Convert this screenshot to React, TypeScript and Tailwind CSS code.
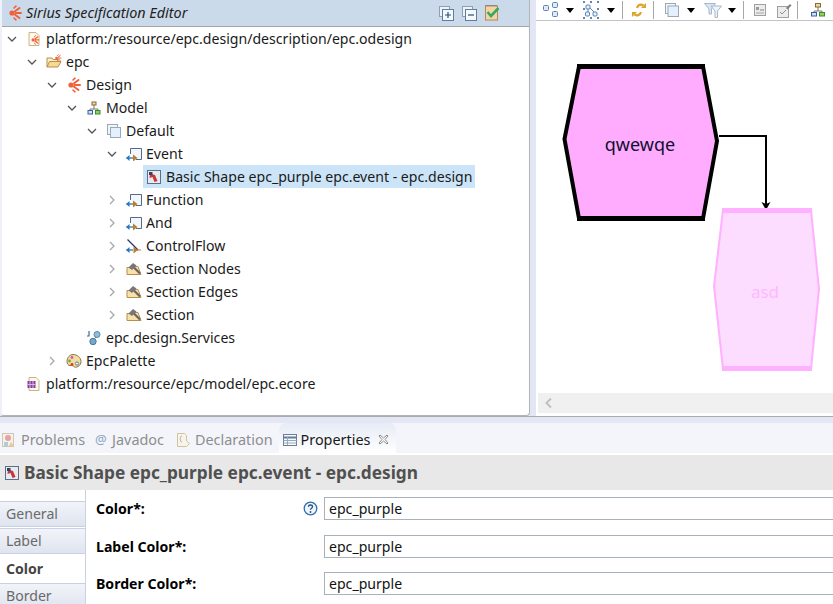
import type { ReactNode } from "react";

const SANS = "font-['Noto_Sans','Open_Sans',sans-serif]";

function Sirius({ x = 0, y = 0, s = 1 }: { x?: number; y?: number; s?: number }) {
  return (
    <g transform={`translate(${x} ${y}) scale(${s})`} stroke="#f0603a" strokeLinecap="round">
      <circle cx="5" cy="8" r="2.6" fill="#f0603a" stroke="none" />
      <path d="M8 6.3 L12.5 3 M8.7 8 L14 8 M8 9.7 L12.5 13" strokeWidth="2" />
      <path d="M7 3 L9 1.2 M7 13 L9 14.8" strokeWidth="1.6" />
    </g>
  );
}

function Icon({ children }: { children: ReactNode }) {
  return (
    <svg width="16" height="16" viewBox="0 0 16 16" className="shrink-0">
      {children}
    </svg>
  );
}

const icons: Record<string, ReactNode> = {
  sirius: <Sirius />,
  doc: (
    <>
      <path d="M3 1.5h7l3 3v10H3z" fill="#fdf8ec" stroke="#c9b48a" />
      <Sirius x={4} y={4} s={0.62} />
    </>
  ),
  folder: (
    <>
      <path d="M1 13V4h5l1 1.5h5V8" fill="#fbeec8" stroke="#b78f4a" />
      <path d="M1 13l2.5-5.5H15L12 13z" fill="#f8d98f" stroke="#b78f4a" />
      <Sirius x={8} y={0} s={0.5} />
    </>
  ),
  model: (
    <>
      <path d="M8 5v4M4 11V9h8v2" fill="none" stroke="#777" />
      <rect x="6" y="2" width="4" height="3" fill="#e8d8a8" stroke="#8a6a2a" />
      <rect x="2" y="10.5" width="4.5" height="3.5" fill="#cfe0f5" stroke="#35609c" />
      <rect x="9.5" y="10.5" width="4.5" height="3.5" fill="#8fd05f" stroke="#3a8a30" />
    </>
  ),
  layer: (
    <>
      <rect x="1.5" y="1.5" width="10" height="10" fill="#f2f6fb" stroke="#9aa8b8" />
      <rect x="4.5" y="4.5" width="10" height="10" fill="#e4f0fb" stroke="#9aa8b8" />
    </>
  ),
  mapping: (
    <>
      <path d="M4.5 8V2.5h11v11H10" fill="#f2f7fd" stroke="#566b8a" />
      <path d="M0.5 12H7" stroke="#2878c0" strokeWidth="1.3" />
      <path d="M3.5 9l-3.5 3 3.5 3z" fill="#2878c0" />
      <path d="M7 8.5l4.5 3.5L7 15.5z" fill="#c07c28" />
    </>
  ),
  shape: (
    <>
      <rect x="1.5" y="1.5" width="13" height="13" fill="#e6ebf2" stroke="#5d6f85" />
      <path d="M4 4.5l5 1.5 2.5 6-3 1-2-5-3 1z" fill="#c8353a" />
      <rect x="3" y="3" width="3.5" height="3" fill="#33445c" />
    </>
  ),
  flow: (
    <>
      <path d="M1.5 1.5L12 12" stroke="#24386e" strokeWidth="1.3" />
      <path d="M0.5 12H7" stroke="#2878c0" strokeWidth="1.3" />
      <path d="M3.5 9l-3.5 3 3.5 3z" fill="#2878c0" />
      <path d="M7.5 8.5l4.5 3.5-4.5 3.5z" fill="#c07c28" />
      <path d="M11 12h4" stroke="#c07c28" />
    </>
  ),
  section: (
    <>
      <path d="M1 13.5V6.5h3l1-1h7l3 8z" fill="#f9dfa8" stroke="#b78f4a" />
      <path d="M2.5 6.5L7 2l3.5 2.5-4.5 4.5z" fill="#77777b" />
      <path d="M8 6.5l6 6" stroke="#66666a" strokeWidth="2.2" />
    </>
  ),
  services: (
    <>
      <path d="M3 1v5H1" fill="none" stroke="#3a6e9a" strokeWidth="1.2" />
      <circle cx="11" cy="4.5" r="3" fill="#8cc0de" stroke="#5a86a8" />
      <circle cx="7" cy="11.5" r="3.2" fill="#74a8cc" stroke="#4a7898" />
      <path d="M9 8l1-1" stroke="#5a86a8" />
    </>
  ),
  palette: (
    <>
      <path d="M7 1.5c4 0 8 3 8 7 0 2-1 4-3 5s-3 1-4 0-2-1-4-1-3-2-3-4c0-4 3-7 6-7z" fill="#f3dc9c" stroke="#8a7440" />
      <circle cx="6" cy="4.5" r="1.4" fill="#c45ac8" />
      <circle cx="3.5" cy="8" r="1.4" fill="#5ab84a" />
      <circle cx="6" cy="11.5" r="1.4" fill="#e03838" />
      <circle cx="11" cy="10.5" r="1.6" fill="#f6f6f6" stroke="#5a7ac0" />
    </>
  ),
  ecore: (
    <>
      <path d="M3 1.5h7l3 3v10H3z" fill="#fdf8ec" stroke="#c9b48a" />
      <rect x="1.5" y="5" width="8" height="7" fill="#8a3f9c" />
      <path d="M4 5v7M7 5v7M1.5 8.5h8" stroke="#d9b8e0" />
    </>
  ),
};

function Chevron({ open }: { open: boolean }) {
  return (
    <svg width="10" height="10" viewBox="0 0 10 10">
      {open ? (
        <path d="M1 3l4 4 4-4" fill="none" stroke="#555" strokeWidth="1.3" />
      ) : (
        <path d="M3 1l4 4-4 4" fill="none" stroke="#a8a8a8" strokeWidth="1.3" />
      )}
    </svg>
  );
}

type Node = { depth: number; icon: string; label: string; toggle?: "open" | "closed"; selected?: boolean };

const tree: Node[] = [
  { depth: 0, icon: "doc", label: "platform:/resource/epc.design/description/epc.odesign", toggle: "open" },
  { depth: 1, icon: "folder", label: "epc", toggle: "open" },
  { depth: 2, icon: "sirius", label: "Design", toggle: "open" },
  { depth: 3, icon: "model", label: "Model", toggle: "open" },
  { depth: 4, icon: "layer", label: "Default", toggle: "open" },
  { depth: 5, icon: "mapping", label: "Event", toggle: "open" },
  { depth: 6, icon: "shape", label: "Basic Shape epc_purple epc.event - epc.design", selected: true },
  { depth: 5, icon: "mapping", label: "Function", toggle: "closed" },
  { depth: 5, icon: "mapping", label: "And", toggle: "closed" },
  { depth: 5, icon: "flow", label: "ControlFlow", toggle: "closed" },
  { depth: 5, icon: "section", label: "Section Nodes", toggle: "closed" },
  { depth: 5, icon: "section", label: "Section Edges", toggle: "closed" },
  { depth: 5, icon: "section", label: "Section", toggle: "closed" },
  { depth: 3, icon: "services", label: "epc.design.Services" },
  { depth: 2, icon: "palette", label: "EpcPalette", toggle: "closed" },
  { depth: 0, icon: "ecore", label: "platform:/resource/epc/model/epc.ecore" },
];

function TreeRow({ node }: { node: Node }) {
  return (
    <div className="flex h-[23px] items-center" style={{ paddingLeft: 2 + node.depth * 20 }}>
      <div className="flex w-4 shrink-0 justify-center">
        {node.toggle && <Chevron open={node.toggle === "open"} />}
      </div>
      <div className={`ml-[3px] flex h-[23px] items-center pl-[3px] pr-[3px] ${node.selected ? "bg-[#cce4f7]" : ""}`}>
        <Icon>{icons[node.icon]}</Icon>
        <span className="ml-1 whitespace-nowrap text-[#1a1a1a]">{node.label}</span>
      </div>
    </div>
  );
}

function TreePanel() {
  return (
    <div className="flex w-[530px] shrink-0 flex-col rounded-bl-[4px] rounded-br-[4px] border-b border-l-2 border-r border-[#b4b4b4] border-l-[#eef1f8] bg-white">
      <div className="flex h-[27px] shrink-0 items-center border-b border-[#a5a5a5] bg-[#cbdaea] pl-[5px] pr-[29px]">
        <Icon>
          <Sirius />
        </Icon>
        <span className="ml-[3px] text-[14.4px] italic text-[#222]">Sirius Specification Editor</span>
        <div className="ml-auto flex items-center gap-[8px]">
          <svg width="15" height="15" viewBox="0 0 15 15">
            <rect x="0.5" y="0.5" width="10" height="10" fill="#eef3f8" stroke="#8da0b4" />
            <rect x="3.5" y="3.5" width="11" height="11" fill="#f6f9fc" stroke="#5f7d9c" />
            <path d="M6 9h6M9 6v6" stroke="#24527e" strokeWidth="1.2" />
          </svg>
          <svg width="15" height="15" viewBox="0 0 15 15">
            <rect x="0.5" y="0.5" width="10" height="10" fill="#eef3f8" stroke="#8da0b4" />
            <rect x="3.5" y="3.5" width="11" height="11" fill="#f6f9fc" stroke="#5f7d9c" />
            <path d="M6 9h6" stroke="#24527e" strokeWidth="1.2" />
          </svg>
          <svg width="15" height="18" viewBox="0 0 15 18">
            <rect x="0.5" y="2" width="12" height="14" fill="#f3d5a5" stroke="#b08a58" />
            <path d="M0.5 1.5h12" stroke="#5a5a6a" strokeDasharray="1 1" />
            <path d="M2.5 8l3.5 4L13.5 4" fill="none" stroke="#3aa860" strokeWidth="2.6" />
          </svg>
        </div>
      </div>
      <div className="flex-1">
        {tree.map((node) => (
          <TreeRow key={node.label + node.depth} node={node} />
        ))}
      </div>
    </div>
  );
}

function Caret() {
  return <span className="h-0 w-0 border-x-[4.5px] border-t-[5px] border-x-transparent border-t-black" />;
}

function Sep() {
  return <span className="block h-[18px] w-px bg-[#a8a8a8]" />;
}

function Toolbar() {
  return (
    <div className="flex h-[21px] shrink-0 items-center border-b border-[#c4c4c4] bg-white pl-[7px]">
      <svg width="16" height="16" viewBox="0 0 16 16" className="mr-[7px]">
        <rect x="0.5" y="3.5" width="5" height="5" rx="1" fill="#dfeafa" stroke="#5a82b4" />
        <rect x="9.5" y="0.5" width="5" height="5" rx="1" fill="#dfeafa" stroke="#5a82b4" />
        <rect x="9.5" y="9.5" width="5" height="5" rx="1" fill="#dfeafa" stroke="#5a82b4" />
      </svg>
      <Caret />
      <svg width="18" height="18" viewBox="0 0 18 18" className="ml-[8px] mr-[7px]">
        <rect x="4" y="4" width="4" height="4" rx="1" fill="#eaf1fb" stroke="#5a82b4" />
        <rect x="3.5" y="11" width="4" height="4" rx="1" fill="#eaf1fb" stroke="#5a82b4" />
        <rect x="11" y="11" width="4" height="4" rx="1" fill="#eaf1fb" stroke="#5a82b4" />
        <path d="M6 8v3M8 7l4 4" stroke="#5a82b4" />
        <path d="M1 1h2M8 1h2M15 1h2M1 8h2M15 8h2M1 17h2M8 17h2M15 17h2" stroke="#2f5c94" strokeWidth="1.6" />
      </svg>
      <Caret />
      <span className="ml-[7px]"><Sep /></span>
      <svg width="16" height="16" viewBox="0 0 16 16" className="ml-[8px] mr-[6px]">
        <path d="M6 6c1-3.5 4-4 6.5-2.5" fill="none" stroke="#dca428" strokeWidth="2.2" />
        <path d="M15 1v5h-5z" fill="#dca428" />
        <path d="M10 10c-1 3.5-4 4-6.5 2.5" fill="none" stroke="#dca428" strokeWidth="2.2" />
        <path d="M1 15v-5h5z" fill="#dca428" />
      </svg>
      <Sep />
      <svg width="14" height="14" viewBox="0 0 14 14" className="ml-[11px] mr-[8px]">
        <rect x="0.5" y="0.5" width="10" height="10" fill="#f3f6fa" stroke="#9aa8b8" />
        <rect x="3" y="3" width="10.5" height="10.5" fill="#e4f0fb" stroke="#9aa8b8" />
      </svg>
      <Caret />
      <svg width="18" height="16" viewBox="0 0 18 16" className="ml-[9px] mr-[6px]">
        <path d="M0.5 1.5h11L7.5 7v5H5V7z" fill="#d6e6f4" stroke="#a8b8c8" />
        <path d="M7 4h10.5l-4 5v6.5h-2.5V9z" fill="#eaf4fb" stroke="#a8b8c8" />
      </svg>
      <Caret />
      <span className="ml-[7px]"><Sep /></span>
      <svg width="12" height="12" viewBox="0 0 12 12" className="ml-[10px] mr-[11px]">
        <rect x="0.5" y="0.5" width="11" height="11" fill="#ececec" stroke="#a0a0a0" />
        <rect x="2" y="3" width="3" height="3" fill="#9a9a9a" />
        <rect x="6" y="5" width="4" height="2" fill="#b8b8b8" />
        <rect x="2" y="8" width="8" height="2" fill="#c8c8c8" />
      </svg>
      <svg width="15" height="15" viewBox="0 0 15 15" className="mr-[5px]">
        <rect x="0.5" y="3.5" width="11" height="11" fill="#ececec" stroke="#a0a0a0" />
        <path d="M9 5l4-4 1.5 1.5-4 4z" fill="#808080" />
        <path d="M3 9l2 2 4-4" fill="none" stroke="#909090" />
      </svg>
      <Sep />
      <svg width="16" height="16" viewBox="0 0 16 16" className="ml-[12px]">
        <path d="M8 5v4M4 11V9h8v2" fill="none" stroke="#777" />
        <rect x="5.5" y="1.5" width="5" height="3.5" fill="#e8d8a8" stroke="#8a6a2a" />
        <rect x="1.5" y="10.5" width="5" height="3.5" fill="#cfe0f5" stroke="#35609c" />
        <rect x="9.5" y="10.5" width="5" height="3.5" fill="#8fd05f" stroke="#3a8a30" />
      </svg>
    </div>
  );
}

function Diagram() {
  // viewBox keeps the screen coordinates of the picture
  return (
    <svg width="297" height="372" viewBox="536 21 297 372" className="block shrink-0">
      <polygon points="579,66.5 703,66.5 717,141 703,218.5 579,218.5 564.5,139" fill="#ffacff" stroke="#000" strokeWidth="4" strokeLinejoin="miter" />
      <rect x="577" y="64" width="128" height="5" fill="#000" />
      <rect x="577" y="216" width="128" height="5" fill="#000" />
      <text x="640" y="151" textAnchor="middle" fontFamily="'Noto Sans', sans-serif" fontSize="18" fill="#101030">qwewqe</text>
      <path d="M719 136H766V204" fill="none" stroke="#000" strokeWidth="2" />
      <polygon points="761.5,202 766,210 770.5,202 766,204" fill="#000" />
      <polygon points="723,210 811,210 819,289 811,369 723,369 714,286" fill="#fcdcff" stroke="#ffb0ff" strokeWidth="2" />
      <rect x="722" y="208" width="90" height="5" fill="#ffb0ff" />
      <rect x="722" y="366" width="90" height="5" fill="#ffb0ff" />
      <text x="765" y="298" textAnchor="middle" fontFamily="'Noto Sans', sans-serif" fontSize="17" fill="#fdb9fd">asd</text>
    </svg>
  );
}

function DiagramPanel() {
  return (
    <div className="flex min-w-0 flex-1 flex-col bg-white">
      <Toolbar />
      <Diagram />
      <div className="ml-[2px] flex h-[20px] shrink-0 items-center bg-[#f0f0f0] pl-[6px]">
        <svg width="10" height="12" viewBox="0 0 10 12">
          <path d="M7 1.5L2.5 6 7 10.5" fill="none" stroke="#c0c0c0" strokeWidth="2" />
        </svg>
      </div>
      <div className="h-[3px] shrink-0 bg-white" />
    </div>
  );
}

function Tab({ icon, label, active, close }: { icon: ReactNode; label: string; active?: boolean; close?: boolean }) {
  return (
    <div
      className={`flex h-[30px] items-center pt-[3px] text-[14.4px] ${
        active
          ? "-ml-px rounded-t-[7px] bg-gradient-to-b from-[#e6ecf5] to-[#ffffff] pl-[4px] pr-[7px] text-[#1a1a1a]"
          : "pl-px pr-[7px] text-[#8e8e8e]"
      }`}
    >
      {icon}
      <span className="ml-[4px]">{label}</span>
      {close && (
        <svg width="11" height="11" viewBox="0 0 11 11" className="ml-[8px]">
          <path d="M1 2l1-1 3.5 3L9 1l1 1-3 3.5L10 9l-1 1-3.5-3L2 10l-1-1 3-3.5z" fill="#fff" stroke="#8a8a8a" />
        </svg>
      )}
    </div>
  );
}

function SideTab({ label, active }: { label: string; active?: boolean }) {
  return (
    <div
      className={
        active
          ? "flex h-[27px] shrink-0 items-center bg-white pl-[6px] font-bold text-[#444]"
          : "flex h-[26px] shrink-0 items-center border-y border-[#c8d2e2] bg-gradient-to-b from-[#f2f4f9] to-[#dfe4ef] pl-[6px] text-[#6a6a6a]"
      }
    >
      {label}
    </div>
  );
}

function Field({ label, help, className }: { label: string; help?: boolean; className: string }) {
  return (
    <div className={`flex h-[23px] items-center ${className}`}>
      <span className="w-[198px] shrink-0 font-bold text-black">{label}</span>
      <div className="flex w-[30px] shrink-0 justify-end pr-[6px]">
        {help && (
          <svg width="15" height="15" viewBox="0 0 15 15">
            <circle cx="7.5" cy="7.5" r="6.3" fill="#eef4fb" stroke="#2f6ea8" strokeWidth="1.3" />
            <path d="M5.5 5.8c0-2.4 4-2.4 4 0 0 1.6-2 1.4-2 3" fill="none" stroke="#24527e" strokeWidth="1.3" />
            <circle cx="7.5" cy="11" r="0.9" fill="#24527e" />
          </svg>
        )}
      </div>
      <div className="flex h-[23px] flex-1 items-center border-y border-l border-[#a9b2bb] bg-white pl-[4px] text-[#111]">
        epc_purple
      </div>
    </div>
  );
}

function PropertiesPanel() {
  return (
    <div className="flex min-h-0 flex-1 flex-col bg-white">
      <div className="flex h-[30px] shrink-0 items-end bg-[#f3f5fb]">
        <Tab
          label="Problems"
          icon={
            <svg width="16" height="16" viewBox="0 0 16 16" className="opacity-60">
              <rect x="1.5" y="1.5" width="11" height="13" fill="#f5efe0" stroke="#b8a888" />
              <circle cx="7" cy="6" r="3" fill="#e26a6a" />
              <rect x="3" y="10" width="4" height="4" fill="#7fb0d8" />
              <path d="M10 10l3 4h-5z" fill="#e8b040" />
            </svg>
          }
        />
        <Tab
          label="Javadoc"
          icon={<span className="ml-[2px] w-[13px] text-[13px] leading-none text-[#8aa4c0]">@</span>}
        />
        <Tab
          label="Declaration"
          icon={
            <svg width="16" height="16" viewBox="0 0 16 16" className="ml-[3px] opacity-60">
              <path d="M2.5 1.5h7l2 2V9l3 2.5-3 3H2.5z" fill="#fbf4e0" stroke="#c0a060" />
              <path d="M7 4c-2 0-1 2-2 3 1 1 0 3 2 3" fill="none" stroke="#8a8a8a" />
            </svg>
          }
        />
        <Tab
          active
          close
          label="Properties"
          icon={
            <svg width="14" height="14" viewBox="0 0 14 14">
              <rect x="0.5" y="1.5" width="13" height="11" fill="#f7f9fc" stroke="#6f7f92" />
              <path d="M0.5 4.5h13" stroke="#5f7f9f" strokeWidth="2" />
              <path d="M0.5 7.5h13M0.5 10h13M4.5 4v8" stroke="#9aa8b8" />
            </svg>
          }
        />
      </div>
      <div className="h-[2px] shrink-0 bg-white" />
      <div className="flex h-[35px] shrink-0 items-center bg-[#e8e8e8] pl-[4px]">
        <Icon>{icons.shape}</Icon>
        <span className="ml-[4px] text-[17.25px] font-bold text-[#505050]">
          Basic Shape epc_purple epc.event - epc.design
        </span>
      </div>
      <div className="flex min-h-0 flex-1 overflow-hidden">
        <div className="flex w-[86px] shrink-0 flex-col gap-px border-r border-[#c8d2e2] pt-[11px]">
          <SideTab label="General" />
          <SideTab label="Label" />
          <SideTab label="Color" active />
          <SideTab label="Border" />
        </div>
        <div className="flex min-w-0 flex-1 flex-col pl-[10px] pt-[7px]">
          <Field label="Color*:" help className="" />
          <Field label="Label Color*:" className="mt-[15px]" />
          <Field label="Border Color*:" className="mt-[14px]" />
        </div>
      </div>
    </div>
  );
}

export default function App() {
  return (
    <div className={`flex h-[604px] w-[833px] flex-col overflow-hidden bg-[#e3e7f5] text-[14.1px] ${SANS}`}>
      <div className="flex h-[417px] shrink-0 border-b border-[#ababab] bg-[#e3e7f5]">
        <TreePanel />
        <div className="w-[6px] shrink-0" />
        <DiagramPanel />
      </div>
      <div className="h-[6px] shrink-0" />
      <PropertiesPanel />
    </div>
  );
}
